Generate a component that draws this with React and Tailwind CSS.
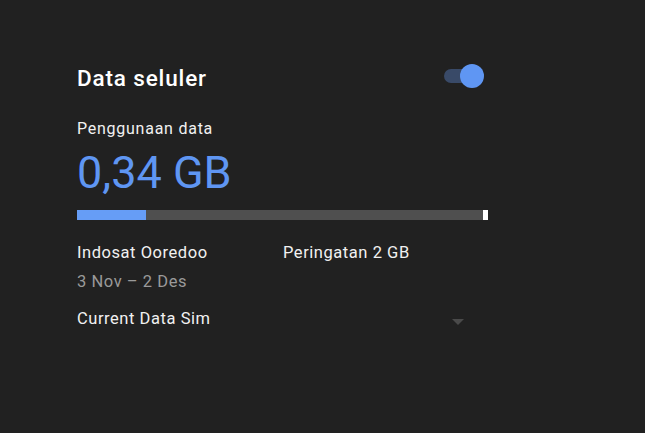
import React from "react";

export default function App() {
  return (
    <div
      className="w-[645px] h-[433px] bg-[#212121] overflow-hidden"
      style={{ fontFamily: "Roboto, 'Noto Sans', sans-serif" }}
    >
      <div className="pl-[77px] pt-[64px] w-[488px]">
        <div className="flex justify-between items-start h-[28px] w-[407px]">
          <div className="text-[22.5px] leading-[28px] font-medium tracking-[0.85px] text-white">Data seluler</div>
          <div className="relative w-[40px] h-[24px]">
            <div className="absolute left-0 top-[5px] w-[34px] h-[14px] rounded-full bg-[#394a68]" />
            <div className="absolute right-0 top-0 w-[24px] h-[24px] rounded-full bg-[#5f96f3]" />
          </div>
        </div>
        <div className="mt-[27px] text-[16px] leading-[20px] tracking-[0.75px] text-[#f1f1f1]">Penggunaan data</div>
        <div className="mt-[8px] text-[45px] leading-[52px] text-[#5f96f3]">0,34 GB</div>
        <div className="mt-[11px] flex h-[10px] w-[411px]">
          <div className="w-[69px] bg-[#669df6]" />
          <div className="flex-1 bg-[#4f4f4f]" />
          <div className="w-[5px] bg-white" />
        </div>
        <div className="mt-[23px] flex text-[16.5px] leading-[20px] tracking-[0.55px] text-[#f1f1f1]">
          <div className="w-[206px]">Indosat Ooredoo</div>
          <div>Peringatan 2 GB</div>
        </div>
        <div className="mt-[9px] text-[16.5px] leading-[20px] tracking-[0.55px] text-[#9a9a9a]">3 Nov – 2 Des</div>
        <div className="mt-[17px] flex items-center justify-between w-[387px] h-[20px]">
          <div className="text-[16.5px] leading-[20px] tracking-[0.55px] text-[#f1f1f1]">Current Data Sim</div>
          <svg width="12" height="7" viewBox="0 0 12 7" className="mt-[7px]">
            <path d="M0 0 L12 0 L6 6 Z" fill="#4a4a4a" />
          </svg>
        </div>
      </div>
    </div>
  );
}
